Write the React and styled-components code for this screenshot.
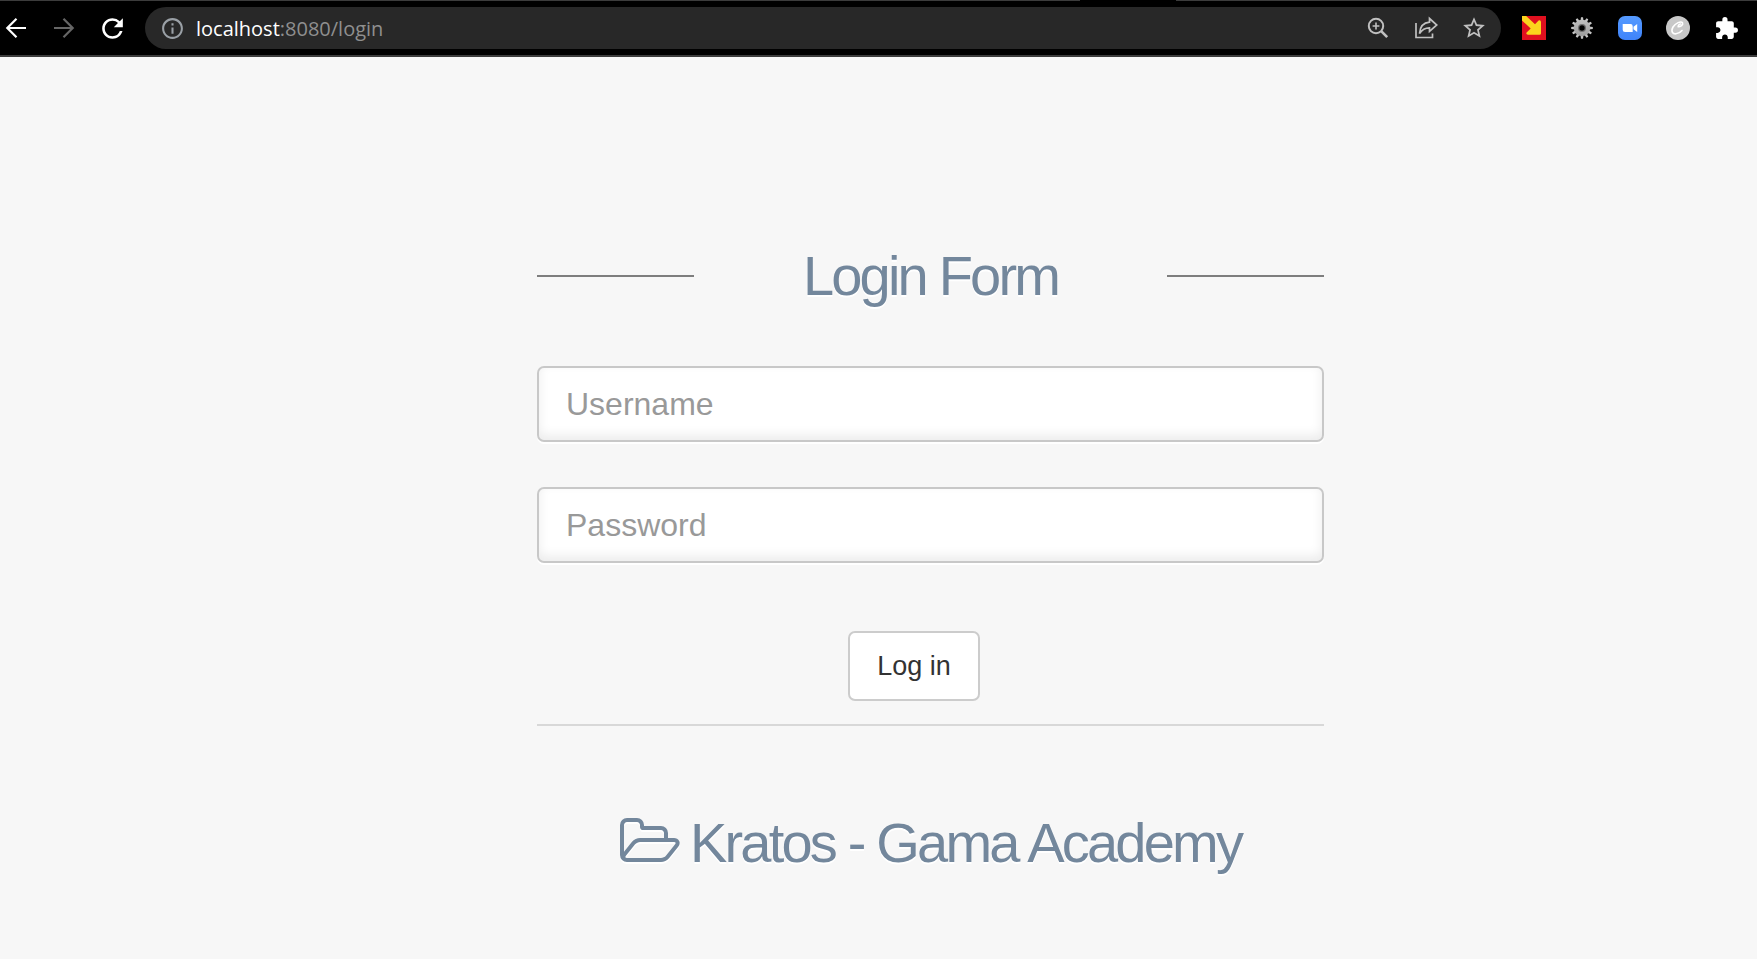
import React from 'react';
import styled, { createGlobalStyle } from 'styled-components';
import { MdRefresh, MdInfoOutline, MdStarBorder, MdExtension } from 'react-icons/md';

const GlobalStyle = createGlobalStyle`
  *, *::before, *::after { box-sizing: border-box; }
  body {
    margin: 0;
    background: #f7f7f7;
    font-family: "Liberation Sans", Arial, sans-serif;
  }
`;

const Page = styled.div`
  display: flex;
  flex-direction: column;
  min-height: 100vh;
`;

const BrowserBar = styled.header`
  background: #000;
  border-bottom: 2px solid #3c3c3c;
`;

const TabEdge = styled.div`
  display: flex;
  gap: 96px;
  height: 1px;
`;

const TabEdgeLine = styled.span`
  flex: ${({ $grow }) => $grow} 1 0;
  background: #3c3c3c;
`;

const Toolbar = styled.div`
  display: flex;
  align-items: center;
  height: 54px;
  padding-right: 7px;
`;

const NavButtons = styled.nav`
  display: flex;
  gap: 16px;
  margin-right: 17px;
`;

const IconButton = styled.button`
  display: flex;
  align-items: center;
  justify-content: center;
  flex: none;
  width: ${({ $width }) => $width}px;
  height: 40px;
  padding: 0;
  border: 0;
  background: none;
  color: ${({ $color }) => $color || '#fff'};
`;

const AddressBar = styled.div`
  display: flex;
  align-items: center;
  flex: 1;
  min-width: 0;
  height: 42px;
  padding: 0 3px 0 15px;
  border-radius: 21px;
  background: #282828;
  color: #9aa0a6;
`;

const Address = styled.div`
  flex: 1;
  min-width: 0;
  margin-left: 11px;
  padding-top: 2px;
  overflow: hidden;
  color: #8f8f8f;
  font: 20px/28px "Open Sans", "Noto Sans", sans-serif;
  white-space: nowrap;
`;

const Host = styled.span`
  color: #fff;
`;

const Extensions = styled.div`
  display: flex;
  margin-left: 9px;
`;

const Main = styled.main`
  flex: 1;
  display: flex;
  justify-content: center;
  padding: 196px 0 64px 104px;
`;

const LoginForm = styled.form`
  display: flex;
  flex-direction: column;
  width: 100%;
  max-width: 787px;
`;

const Heading = styled.h1`
  display: flex;
  justify-content: center;
  margin: 0;
  color: #73879c;
  font-size: 56px;
  font-weight: 400;
  line-height: 46px;
  letter-spacing: -0.05em;
  text-shadow: 0 2px 0 #fff;
  white-space: nowrap;
`;

const FormTitle = styled(Heading)`
  align-items: center;
  justify-content: space-between;

  &::before,
  &::after {
    content: "";
    width: 20%;
    height: 2px;
    background: #7e7e7e;
  }
`;

const Brand = styled(Heading)`
  align-items: baseline;
  gap: 10px;
  margin-top: 92px;

  svg {
    filter: drop-shadow(0 2px 0 #fff);
  }
`;

const Fields = styled.div`
  display: flex;
  flex-direction: column;
  gap: 45px;
  margin: 67px 0;
`;

const TextField = styled.input`
  width: 100%;
  height: 76px;
  padding: 0 27px;
  border: 2px solid #c8c8c8;
  border-radius: 7px;
  outline: 0;
  background: #fff;
  box-shadow: 0 2px 0 #fff, inset 0 -5px 11px rgba(0, 0, 0, 0.08);
  color: #777;
  font: 32px "Liberation Sans", Arial, sans-serif;

  &::placeholder {
    color: #999;
    opacity: 1;
  }
`;

const Actions = styled.div`
  display: flex;
  justify-content: center;
  padding: 1px 33px 23px 0;
  border-bottom: 2px solid #d8d8d8;
`;

const SubmitButton = styled.button`
  height: 70px;
  padding: 0 27px;
  border: 2px solid #ccc;
  border-radius: 7px;
  background: #fff;
  color: #333;
  font: 27px "Liberation Sans", Arial, sans-serif;
`;

function Arrow({ forward }) {
  return (
    <svg width="22" height="22" viewBox="0 0 22 22" fill="none" stroke="currentColor" strokeWidth="2.2">
      <path d={forward ? 'M1 11H20M10.5 1.8L19.7 11L10.5 20.2' : 'M21 11H2M11.5 1.8L2.3 11L11.5 20.2'} />
    </svg>
  );
}

function MagnifierIcon() {
  return (
    <svg width="22" height="22" viewBox="0 0 22 22" fill="none" stroke="currentColor">
      <circle cx="9" cy="9" r="7.2" strokeWidth="2" />
      <path d="M14.2 14.2L20.2 20.2" strokeWidth="2.6" />
      <path d="M9 5.6V12.400M5.600 9H12.400" strokeWidth="1.6" />
    </svg>
  );
}

function ShareIcon() {
  return (
    <svg width="24" height="24" viewBox="0 0 24 24" fill="none" stroke="currentColor" strokeWidth="1.7">
      <path d="M2 7V21.5H18.5V17.5" />
      <path d="M15.5 2.5L22.8 9L15.5 15.3V11.8C11 11.8 8 13.5 5.5 17.5C6 11 9.5 6.7 15.5 6.2Z" />
    </svg>
  );
}

function CornerArrowIcon() {
  return (
    <svg width="24" height="24" viewBox="0 0 24 24">
      <path fill="#e0101f" d="M0 0H24V24H0Z" />
      <path
        fill="#fbd41d"
        d="M0 0H4.2L13 8.3L16.6 4.5Q18.8 3.6 19 6V17.5Q19 18.8 17.5 18.8H6Q3.6 18.4 4.6 16.6L8.7 12.5L0 4.5Z"
      />
    </svg>
  );
}

function GearIcon() {
  const teeth = Array.from({ length: 12 }, (_, i) => i * 30);
  return (
    <svg width="24" height="24" viewBox="0 0 24 24">
      <defs>
        <linearGradient id="gear" x1="0" y1="0" x2="0" y2="24" gradientUnits="userSpaceOnUse">
          <stop offset="0" stopColor="#c9c9c9" />
          <stop offset="1" stopColor="#939393" />
        </linearGradient>
      </defs>
      <g fill="url(#gear)">
        {teeth.map((angle) => (
          <path key={angle} d="M10.5 5L11 1.2H13L13.5 5Z" transform={`rotate(${angle} 12 12)`} />
        ))}
        <circle cx="12" cy="12" r="8.2" />
      </g>
      <circle cx="12" cy="12" r="4" fill="#6d6d6d" />
      <circle cx="12" cy="12" r="2.7" fill="#000" />
    </svg>
  );
}

function CameraIcon() {
  return (
    <svg width="24" height="24" viewBox="0 0 24 24">
      <defs>
        <linearGradient id="camera" x1="0" y1="0" x2="0" y2="1">
          <stop offset="0" stopColor="#559aff" />
          <stop offset="1" stopColor="#3f83fa" />
        </linearGradient>
      </defs>
      <rect width="24" height="24" rx="7" fill="url(#camera)" />
      <path fill="#fff" d="M4.7 8H12.5Q14.7 8 14.7 10.2V16H7Q4.7 16 4.7 13.8ZM15.5 10.7L19.2 8V16L15.5 13.3Z" />
    </svg>
  );
}

function ScriptCIcon() {
  return (
    <svg width="24" height="24" viewBox="0 0 24 24" fill="none">
      <circle cx="12" cy="12" r="12" fill="#c8c8c8" />
      <path
        d="M12.2 10.8C14.5 10.8 17.5 8.7 16.5 6.8C15 4.7 9.5 7 7 11C4.5 15.5 6.8 18.2 10 17.8C12.8 17.4 15 15.8 16 14.5M12.2 10.8C12 9.3 13 8.2 14.5 8"
        stroke="#fff"
        strokeWidth="1.6"
        strokeLinecap="round"
      />
    </svg>
  );
}

function FolderOpenIcon() {
  return (
    <svg width="60" height="44" viewBox="0 0 1920 1408" fill="currentColor" aria-hidden="true">
      <path d="M1781 803q0-35-53-35h-1088q-40 0-85.500 21.500t-71.500 52.500l-294 363q-18 24-18 40 0 35 53 35h1088q40 0 86-22t71-53l294-363q18-22 18-39zm-1141-163h768v-160q0-40-28-68t-68-28h-576q-40 0-68-28t-28-68v-64q0-40-28-68t-68-28h-320q-40 0-68 28t-28 68v853l256-315q44-53 116-87.500t140-34.500zm1269 163q0 62-46 120l-295 363q-43 53-116 87.500t-140 34.500h-1088q-92 0-158-66t-66-158v-960q0-92 66-158t158-66h320q92 0 158 66t66 158v32h544q92 0 158 66t66 158v160h192q54 0 99 24.500t67 70.500q15 32 15 68z" />
    </svg>
  );
}

const extensions = [
  { name: 'Corner arrow', icon: <CornerArrowIcon /> },
  { name: 'Settings', icon: <GearIcon /> },
  { name: 'Video meeting', icon: <CameraIcon /> },
  { name: 'Script C', icon: <ScriptCIcon /> },
  { name: 'Extensions', icon: <MdExtension size={25} /> },
];

export default function App() {
  return (
    <Page>
      <GlobalStyle />
      <BrowserBar>
        <TabEdge>
          <TabEdgeLine $grow={1080} />
          <TabEdgeLine $grow={581} />
        </TabEdge>
        <Toolbar>
          <NavButtons aria-label="Browser navigation">
            <IconButton type="button" aria-label="Back" $width={32}><Arrow /></IconButton>
            <IconButton type="button" aria-label="Forward" $width={32} $color="#666"><Arrow forward /></IconButton>
            <IconButton type="button" aria-label="Reload" $width={32}><MdRefresh size={31} /></IconButton>
          </NavButtons>
          <AddressBar>
            <MdInfoOutline size={25} />
            <Address><Host>localhost</Host>:8080/login</Address>
            <IconButton type="button" aria-label="Zoom" $width={48} $color="#c0c0c0"><MagnifierIcon /></IconButton>
            <IconButton type="button" aria-label="Share" $width={48} $color="#c0c0c0"><ShareIcon /></IconButton>
            <IconButton type="button" aria-label="Bookmark" $width={48} $color="#c0c0c0"><MdStarBorder size={26} /></IconButton>
          </AddressBar>
          <Extensions>
            {extensions.map(({ name, icon }) => (
              <IconButton key={name} type="button" aria-label={name} $width={48}>{icon}</IconButton>
            ))}
          </Extensions>
        </Toolbar>
      </BrowserBar>
      <Main>
        <LoginForm onSubmit={(event) => event.preventDefault()}>
          <FormTitle>Login Form</FormTitle>
          <Fields>
            <TextField type="text" name="username" placeholder="Username" aria-label="Username" />
            <TextField type="password" name="password" placeholder="Password" aria-label="Password" />
          </Fields>
          <Actions>
            <SubmitButton type="submit">Log in</SubmitButton>
          </Actions>
          <Brand>
            <FolderOpenIcon />
            <span>Kratos - Gama Academy</span>
          </Brand>
        </LoginForm>
      </Main>
    </Page>
  );
}
